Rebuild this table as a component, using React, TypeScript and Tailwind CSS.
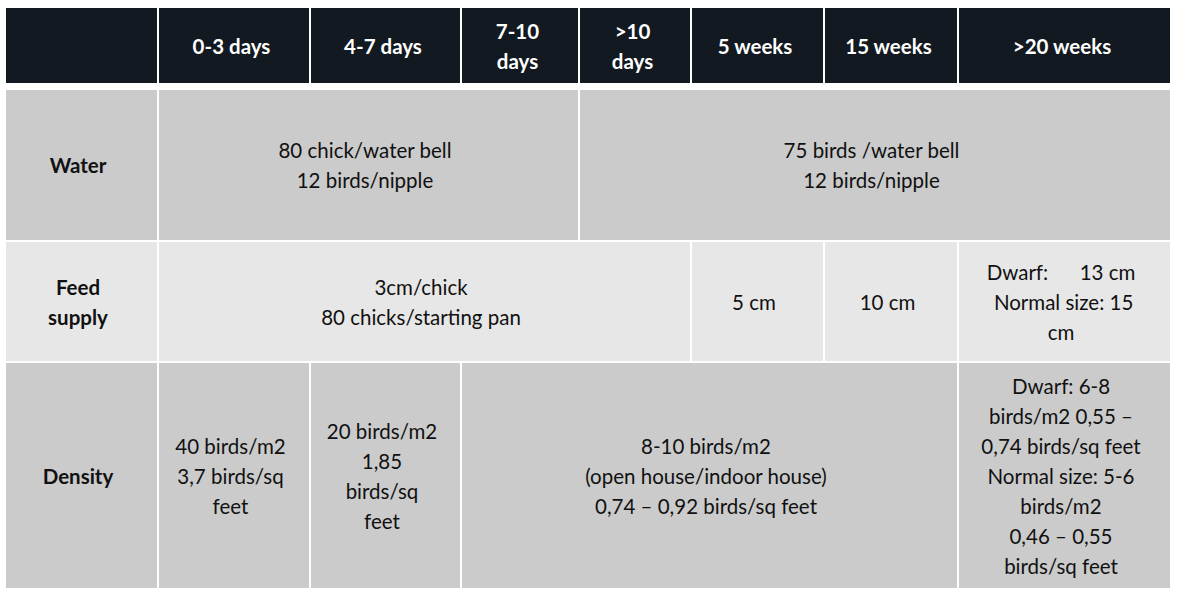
import React from "react";

function L({ lines }: { lines: string[] }) {
  return (
    <div className="flex flex-col items-center">
      {lines.map((l, i) => (
        <div key={i} className="whitespace-pre">
          {l}
        </div>
      ))}
    </div>
  );
}

export default function App() {
  const head = "flex items-center justify-center text-center font-bold text-white text-[20.5px] leading-[30px] bg-[#121920] pr-[5px]";
  const dark = "flex items-center justify-center text-center text-[#111] text-[20.5px] leading-[30px] bg-[#cbcbcb] pr-[7px]";
  const light = "flex items-center justify-center text-center text-[#111] text-[20.5px] leading-[30px] bg-[#e7e7e7] pr-[7px]";
  return (
    <div className="w-[1180px] h-[599px] bg-white pt-[8px] pl-[6px] [font-family:Lato,'Open_Sans',sans-serif]">
      <div className="w-[1164px]">
        <div className="grid grid-cols-[151px_150px_149px_116px_110px_131px_132px_minmax(0,1fr)] gap-x-[2px] h-[75px] bg-white">
          <div className={head}></div>
          <div className={head}>0-3 days</div>
          <div className={head}>4-7 days</div>
          <div className={head}><L lines={["7-10", "days"]} /></div>
          <div className={head}><L lines={[">10", "days"]} /></div>
          <div className={head}>5 weeks</div>
          <div className={head}>15 weeks</div>
          <div className={head}>&gt;20 weeks</div>
        </div>
        <div className="mt-[7px] grid grid-cols-[151px_150px_149px_116px_110px_131px_132px_minmax(0,1fr)] grid-rows-[150px_119px_225px] gap-[2px]">
          <div className={dark + " font-bold"}>Water</div>
          <div className={dark + " col-span-3"}>
            <L lines={["80 chick/water bell", "12 birds/nipple"]} />
          </div>
          <div className={dark + " col-span-4"}>
            <L lines={["75 birds /water bell", "12 birds/nipple"]} />
          </div>

          <div className={light + " font-bold"}>
            <L lines={["Feed", "supply"]} />
          </div>
          <div className={light + " col-span-4"}>
            <L lines={["3cm/chick", "80 chicks/starting pan"]} />
          </div>
          <div className={light}>5 cm</div>
          <div className={light}>10 cm</div>
          <div className={light}>
            <L lines={["Dwarf:      13 cm", " Normal size: 15", "cm"]} />
          </div>

          <div className={dark + " font-bold"}>Density</div>
          <div className={dark}>
            <L lines={["40 birds/m2", "3,7 birds/sq", "feet"]} />
          </div>
          <div className={dark}>
            <L lines={["20 birds/m2", "1,85", "birds/sq", "feet"]} />
          </div>
          <div className={dark + " col-span-4"}>
            <L lines={["8-10 birds/m2", "(open house/indoor house)", "0,74 – 0,92 birds/sq feet"]} />
          </div>
          <div className={dark}>
            <L
              lines={[
                "Dwarf: 6-8",
                "birds/m2 0,55 –",
                "0,74 birds/sq feet",
                "Normal size: 5-6",
                "birds/m2",
                "0,46 – 0,55",
                "birds/sq feet",
              ]}
            />
          </div>
        </div>
      </div>
    </div>
  );
}
